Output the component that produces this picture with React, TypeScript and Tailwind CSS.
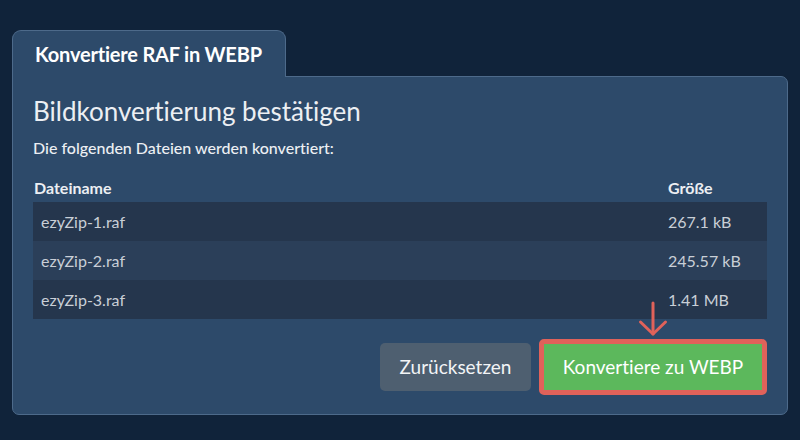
const files = [
  { name: "ezyZip-1.raf", size: "267.1 kB" },
  { name: "ezyZip-2.raf", size: "245.57 kB" },
  { name: "ezyZip-3.raf", size: "1.41 MB" },
];

export default function App() {
  return (
    <div
      className="w-[800px] h-[440px] bg-[#10233a] pt-[30px] px-[12px] [font-variant-ligatures:none]"
      style={{ fontFamily: "Lato, 'Open Sans', sans-serif" }}
    >
      {/* tab */}
      <div className="relative z-10 w-[274px] h-[47px] bg-[#2d4a6a] border border-b-0 border-[#4d6a8a] rounded-t-[9px] flex items-center pl-[22px]">
        <span className="text-white font-bold text-[20px] tracking-[-0.2px]">Konvertiere RAF in WEBP</span>
      </div>

      <div className="-mt-px w-[776px] bg-[#2d4a6a] border border-[#4d6a8a] rounded-b-[7px] rounded-tr-[7px] px-[20px] pt-[19px] pb-[19px]">
        <h1 className="text-[26px] leading-[31px] text-[#eceff3]">Bildkonvertierung bestätigen</h1>
        <p className="mt-[11px] text-[16px] leading-[19px] font-medium text-[#eceff3]">
          Die folgenden Dateien werden konvertiert:
        </p>

        <div className="mt-[21px] flex text-[16px] leading-[19px] font-bold text-[#eceff3] pb-[5px]">
          <div className="w-[635px] pl-px">Dateiname</div>
          <div>Größe</div>
        </div>
        <div className="flex flex-col">
          {files.map((f, i) => (
            <div
              key={f.name}
              className={
                "flex items-center h-[39px] text-[16px] text-[#c9cfd7] " +
                (i % 2 === 0 ? "bg-[#25364d]" : "bg-[#2b3f59]")
              }
            >
              <div className="w-[635px] pl-[8px]">{f.name}</div>
              <div>{f.size}</div>
            </div>
          ))}
        </div>

        <div className="mt-[20px] flex justify-end items-center gap-[8px]">
          <button className="w-[151px] h-[48px] rounded-[5px] bg-[#4e5f70] text-[19px] text-[#f2f4f6]">
            Zurücksetzen
          </button>
          <div className="relative">
            <svg
              className="absolute left-1/2 -translate-x-1/2 bottom-full mb-[2px]"
              width="30"
              height="36"
              viewBox="0 0 30 36"
              fill="none"
              stroke="#e0625a"
              strokeWidth="3"
              strokeLinecap="round"
              strokeLinejoin="round"
            >
              <path d="M15 2 V33" />
              <path d="M2.5 21 L15 33 L27.5 21" />
            </svg>
            <button className="w-[228px] h-[56px] rounded-[5px] border-[5px] border-[#e0625a] bg-[#5cb85c] text-[19px] text-white">
              Konvertiere zu WEBP
            </button>
          </div>
        </div>
      </div>
    </div>
  );
}
